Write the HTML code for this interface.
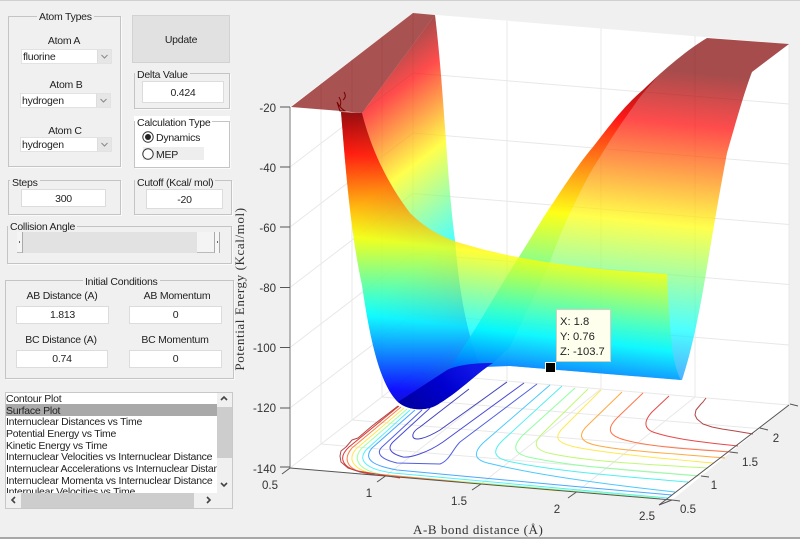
<!DOCTYPE html>
<html><head><meta charset="utf-8">
<style>
html,body{margin:0;padding:0}
body{width:800px;height:539px;overflow:hidden;background:#f0f0f0;position:relative;font-family:"Liberation Sans",Arial,sans-serif;font-size:10.5px;letter-spacing:-.25px;color:#222}
.a{position:absolute;box-sizing:border-box}
.p{border:1px solid #c4c4c4;box-shadow:1px 1px 0 #fafafa}
.t{position:absolute;background:#f0f0f0;padding:0 2px;white-space:nowrap;line-height:12px;height:12px}
.c{position:absolute;white-space:nowrap;line-height:12px;height:12px;transform:translateX(-50%)}
.i{position:absolute;box-sizing:border-box;background:#fff;border:1px solid #dcdcdc;text-align:center;white-space:nowrap}
.s{position:absolute;box-sizing:border-box;background:#fff;border:1px solid #e2e2e2;line-height:14px;padding-left:1px;white-space:nowrap}
.s b{position:absolute;right:0;top:0;bottom:0;width:13px;background:#e6e6e6;border-left:1px solid #ddd}
.s svg{position:absolute;right:3px;top:4px}
.r{position:absolute;left:0;height:11.7px;line-height:12px;white-space:nowrap;width:211px;overflow:hidden}
svg{position:absolute}
</style></head><body>
<div class="a" style="left:0;top:0;width:800px;height:1px;background:#d0d0d0"></div>
<div class="a" style="left:0;top:537px;width:800px;height:2px;background:#a8a8a8"></div>

<div class="a p" style="left:8px;top:16px;width:113px;height:151px"></div>
<div class="t" style="left:37px;top:12px;height:10px;line-height:11px">Atom Types</div>
<div class="c" style="left:64px;top:35px">Atom A</div>
<div class="s" style="left:21px;top:49px;width:91px;height:15px">fluorine<b></b><svg width="7" height="5"><path d="M0.5 1L3.5 4L6.5 1" fill="none" stroke="#888"/></svg></div>
<div class="c" style="left:66px;top:79px">Atom B</div>
<div class="s" style="left:20px;top:93px;width:91px;height:15px">hydrogen<b></b><svg width="7" height="5"><path d="M0.5 1L3.5 4L6.5 1" fill="none" stroke="#888"/></svg></div>
<div class="c" style="left:65px;top:125px">Atom C</div>
<div class="s" style="left:20px;top:137px;width:92px;height:15px">hydrogen<b></b><svg width="7" height="5"><path d="M0.5 1L3.5 4L6.5 1" fill="none" stroke="#888"/></svg></div>

<div class="a" style="left:132px;top:15px;width:98px;height:48px;background:#e1e1e1;border:1px solid #d2d2d2;text-align:center;line-height:48px">Update</div>

<div class="a p" style="left:134px;top:73px;width:96px;height:36px"></div>
<div class="t" style="left:135px;top:69px">Delta Value</div>
<div class="i" style="left:142px;top:81px;width:82px;height:22px;line-height:22px">0.424</div>

<div class="a" style="left:134px;top:116px;width:96px;height:6px;background:#fff"></div>
<div class="a p" style="left:134px;top:121px;width:96px;height:47px;background:#fff"></div>
<div class="t" style="left:135px;top:117px;background:#fff">Calculation Type</div>
<div class="a" style="left:143px;top:147px;width:61px;height:13px;background:#eee"></div>
<svg style="left:142px;top:131px" width="14" height="30"><circle cx="6" cy="6" r="5.2" fill="#fff" stroke="#333"/><circle cx="6" cy="6" r="3" fill="#222"/><circle cx="6" cy="23" r="5.2" fill="#fff" stroke="#333"/></svg>
<div class="t" style="left:154px;top:132px;background:none">Dynamics</div>
<div class="t" style="left:154px;top:149px;background:none">MEP</div>

<div class="a p" style="left:8px;top:180px;width:113px;height:35px"></div>
<div class="t" style="left:10px;top:177px">Steps</div>
<div class="i" style="left:21px;top:189px;width:85px;height:18px;line-height:18px">300</div>

<div class="a p" style="left:134px;top:180px;width:98px;height:35px"></div>
<div class="t" style="left:135px;top:177px">Cutoff (Kcal/ mol)</div>
<div class="i" style="left:146px;top:189px;width:77px;height:20px;line-height:21px">-20</div>

<div class="a p" style="left:7px;top:226px;width:225px;height:38px"></div>
<div class="t" style="left:8px;top:221px">Collision Angle</div>
<div class="a" style="left:17px;top:232px;width:203px;height:21px;background:#f4f4f4;border-bottom:1px solid #bbb"></div>
<div class="a" style="left:23px;top:232px;width:174px;height:21px;background:#e2e2e2"></div>
<div class="a" style="left:22px;top:232px;width:1px;height:21px;background:#aaa"></div>
<div class="a" style="left:214px;top:232px;width:6px;height:21px;background:#f6f6f6;border-left:1px solid #aaa;border-right:1px solid #aaa"></div>
<div class="a" style="left:19px;top:241px;width:1px;height:2px;background:#666"></div>
<div class="a" style="left:217px;top:241px;width:1px;height:2px;background:#666"></div>

<div class="a p" style="left:5px;top:280px;width:229px;height:99px"></div>
<div class="t" style="left:83px;top:276px">Initial Conditions</div>
<div class="c" style="left:62px;top:290px">AB Distance (A)</div>
<div class="c" style="left:177px;top:290px">AB Momentum</div>
<div class="i" style="left:16px;top:306px;width:93px;height:18px;line-height:17px">1.813</div>
<div class="i" style="left:129px;top:306px;width:93px;height:18px;line-height:17px">0</div>
<div class="c" style="left:61px;top:334px">BC Distance (A)</div>
<div class="c" style="left:175px;top:334px">BC Momentum</div>
<div class="i" style="left:16px;top:350px;width:92px;height:18px;line-height:17px">0.74</div>
<div class="i" style="left:129px;top:350px;width:93px;height:18px;line-height:17px">0</div>

<div class="a" style="left:5px;top:392px;width:228px;height:117px;border:1px solid #c8c8c8;background:#f0f0f0"></div>
<div class="a" style="left:6px;top:393px;width:211px;height:100px;background:#fff;overflow:hidden">
<div class="a" style="left:0;top:11px;width:211px;height:12px;background:#a9a9a9"></div>
<div class="r" style="top:0">Contour Plot</div>
<div class="r" style="top:11.6px">Surface Plot</div>
<div class="r" style="top:23.3px">Internuclear Distances vs Time</div>
<div class="r" style="top:35px">Potential Energy vs Time</div>
<div class="r" style="top:46.6px">Kinetic Energy vs Time</div>
<div class="r" style="top:58.3px">Internuclear Velocities vs Internuclear Distance</div>
<div class="r" style="top:70px">Internuclear Accelerations vs Internuclear Distance</div>
<div class="r" style="top:81.6px">Internuclear Momenta vs Internuclear Distance</div>
<div class="r" style="top:93.3px">Internulear Velocities vs Time</div>
</div>
<div class="a" style="left:217px;top:407px;width:15px;height:51px;background:#cdcdcd"></div>
<div class="a" style="left:21px;top:493px;width:173px;height:15px;background:#cdcdcd"></div>
<svg style="left:5px;top:392px" width="228" height="117"><g fill="none" stroke="#444" stroke-width="1.6"><path d="M216 8L219 5L222 8"/><path d="M216 91L219 94L222 91"/><path d="M10 105L7 108L10 111"/><path d="M202 105L205 108L202 111"/></g></svg>

<svg style="left:0;top:0;letter-spacing:0" width="800" height="539" viewBox="0 0 800 539">
<defs>
<linearGradient id="gs" gradientUnits="userSpaceOnUse" x1="350" y1="113" x2="314" y2="417">
<stop offset="0" stop-color="#800000"/><stop offset=".13" stop-color="#ff0000"/><stop offset=".4" stop-color="#ffff00"/><stop offset=".65" stop-color="#00ffff"/><stop offset=".88" stop-color="#0000ff"/><stop offset="1" stop-color="#000080"/>
</linearGradient>
<linearGradient id="gb" gradientUnits="userSpaceOnUse" x1="435" y1="15" x2="615" y2="255">
<stop offset="0" stop-color="#800000"/><stop offset=".125" stop-color="#ff0000"/><stop offset=".357" stop-color="#ffff00"/><stop offset=".64" stop-color="#00ffff"/><stop offset=".8" stop-color="#0080ff"/><stop offset=".92" stop-color="#0000ff"/><stop offset="1" stop-color="#000080"/>
</linearGradient>
<linearGradient id="gw" gradientUnits="userSpaceOnUse" x1="700" y1="38" x2="665" y2="388">
<stop offset="0" stop-color="#800000"/><stop offset=".1" stop-color="#800000"/><stop offset=".25" stop-color="#ff0000"/><stop offset=".535" stop-color="#ffff00"/><stop offset=".83" stop-color="#00ffff"/><stop offset=".97" stop-color="#0090ff"/><stop offset="1" stop-color="#0060ff"/>
</linearGradient>
<linearGradient id="gd" gradientUnits="userSpaceOnUse" x1="470" y1="362" x2="420" y2="412">
<stop offset="0" stop-color="#1018e8"/><stop offset=".5" stop-color="#0000d0"/><stop offset="1" stop-color="#0000a8"/>
</linearGradient>
</defs>
<polygon points="290,107 413,13 789,44 789,405 672,500 290,468" fill="#fff"/>
<g stroke="#e8e8e8" stroke-width="1" fill="none">
<path d="M290 167L413 73L789 104M290 227L413 133L789 164M290 287.500L413 193.500L789 224.500M290 347.500L413 253.500L789 284.500M290 408L413 314L789 345M290 468L413 373L789 405"/>
<path d="M321 83V444M352 59.500V420M382 36.500V397M413 13V373M507 21V381M601 28.500V389M695 36V397M789 44V405"/>
<path d="M385.500 476L507 381M481 484L601 389M576.500 492L695 397M321 444L703 476M352 420L734 452M382 397L764 429"/>
</g>

<!-- contours -->
<g fill="none" stroke-width="1" stroke-linejoin="round">
<path stroke="#b04848" d="M706 398L703 402L701 404L696 410L695 415L697 419L703 424L712 427L722 429L735 431L753 434"/>
<path stroke="#e84848" d="M669 396L652 412C642 423 645 430 656 433C675 439 700 442 738 446"/>
<path stroke="#ff7448" d="M643 393L617 418C605 430 610 436 625 440C650 447 690 449 730 452"/>
<path stroke="#ffa840" d="M622 392L588 425C576 436 582 442 595 445C620 451 680 454 725 458"/>
<path stroke="#ffe850" d="M601 390L564 427C552 438 558 443 575 447C610 454 670 459 713 463"/>
<path stroke="#c0f878" d="M588 389L543 433C530 445 537 451 553 454C590 462 660 465 708 468"/>
<path stroke="#90ffa0" d="M575 388L522 436C510 449 516 455 533 458C575 467 640 471 698 476"/>
<path stroke="#50f0f0" d="M562 386L502 441C490 453 496 459 512 462C560 472 630 477 688 482"/>
<path stroke="#48c8ff" d="M550 385L483 443C471 455 476 461 492 464C545 477 620 486 675 492"/>
<path stroke="#5060e0" d="M537 384L460 442C452 450 450 460 440 464L397 463C380 459 376 453 382 447L422 410"/>
<path stroke="#4848d8" d="M524 383L443 442C427 453 410 458 403 457C388 453 388 447 393 442L430 408"/>
<path stroke="#4040c0" d="M507 382L440 430C425 439 415 441 413 437C412 433 415 430 420 427L469 389"/>
<path stroke="#48a8ff" d="M415 410L372 448C362 460 375 466 397 470L570 486L672 495"/>
<path stroke="#50f0ff" d="M410 410L366 450C356 462 370 470 393 473L668 498"/>
<path stroke="#a0ffa0" d="M407 409L361 449C350 463 365 472 385 475L660 498"/>
<path stroke="#ffe850" d="M404 408L356 449C345 462 358 471 375 474L560 491"/>
<path stroke="#ff8040" d="M401 407L352 448C341 461 350 470 365 473L460 482"/>
<path stroke="#e03838" d="M399 406L349 447C336 459 345 468 358 471L400 478"/>
<path stroke="#b04848" d="M398 406L372 426L358 438L352 440L346 447L341 451L340 456L341 462L348 468L360 472L375 475"/>
</g>

<!-- surface layers -->
<path opacity=".7" fill="url(#gb)" d="M341 112L362 113L435 15C438 40 441 70 445 127C448 170 451 210 455 240C459 290 466 330 480 367L487 367C472 378 458 392 440 403C428 412 408 411 398 402C380 385 370 340 362 285C350 230 345 160 341 112Z"/>
<polygon opacity=".68" fill="#800000" points="291,107 413,13 435,15 362,113 341,111"/>
<path d="M344 92Q347 97 343 100M339 97Q342 102 340 106M337 102Q340 108 345 111L340 111Z" fill="none" stroke="#7a0000" stroke-width="1"/>
<path opacity=".7" fill="url(#gw)" d="M707 38L789 44L752 72C745 90 735 125 727 153C720 190 714 225 707 267C700 310 692 350 682 380L510 366L450 367C470 340 495 295 517 260C530 240 540 222 553 203C565 185 580 162 593 147C610 125 625 105 643 90C665 68 690 48 707 38Z"/>
<path opacity=".7" fill="url(#gw)" d="M657 77L643 90C625 105 610 125 593 147C580 162 565 185 553 203C540 222 530 240 517 260C495 295 470 340 450 367L493 363L510 347L548 267C556 245 565 222 573 207C582 188 590 172 600 157C610 140 622 122 633 107C640 96 650 85 657 77Z"/>
<path opacity=".78" fill="url(#gs)" d="M341 112L362 113C370 145 385 180 410 213C425 228 440 236 457 242C490 252 530 262 610 270L667 274C668 300 670 330 673 353C675 365 677 373 681 380L510 366L487 367C472 378 458 392 440 403C428 412 408 411 398 402C380 385 370 340 362 285C350 230 345 160 341 112Z"/>
<path fill="url(#gd)" d="M398 402L447 370C455 366 470 363 493 363L487 367C472 378 458 392 440 403C428 412 408 411 398 402Z"/>

<!-- axes -->
<path d="M290 107V468" stroke="#a8a8a8" stroke-width="1.6" fill="none"/>
<g stroke="#555" stroke-width="1" fill="none">
<path d="M290 468L672 500M659 505L789 405"/>
<path d="M280 107H290M280 167H290M280 227H290M280 287.500H290M280 347.500H290M280 408H290M280 467H290"/>
<path d="M282 474L290 468M385.500 476L377 482M481 484L472 490M576.500 492L568 498M672 500L659 505"/>
<path d="M672 500L680 501M701 476L709 477M730 452L738 453M760 428L768 430M790 404L798 406"/>
</g>
<g font-family="Liberation Sans,Arial,sans-serif" font-size="11.500" fill="#333">
<g text-anchor="end"><text x="276" y="112">-20</text><text x="276" y="172">-40</text><text x="276" y="232">-60</text><text x="276" y="292">-80</text><text x="276" y="352">-100</text><text x="276" y="412">-120</text><text x="276" y="473">-140</text></g>
<g text-anchor="middle"><text x="270" y="489">0.5</text><text x="369" y="497">1</text><text x="459" y="505">1.5</text><text x="557" y="513">2</text><text x="647" y="520">2.5</text>
<text x="688" y="513">0.5</text><text x="714" y="489">1</text><text x="750" y="466">1.5</text><text x="776" y="442">2</text></g>
</g>
<text transform="translate(244,289) rotate(-90)" text-anchor="middle" font-family="Liberation Serif,serif" font-size="13" letter-spacing=".6" fill="#333">Potential Energy (Kcal/mol)</text>
<text x="413" y="534" font-family="Liberation Serif,serif" font-size="13" letter-spacing=".55" fill="#333">A-B bond distance (Å)</text>

<!-- datatip -->
<rect x="556.500" y="309.500" width="54" height="52" fill="#ffffee" stroke="#d0d0c0"/>
<g font-family="Liberation Sans,Arial,sans-serif" font-size="11.200" fill="#222"><text x="560" y="325">X: 1.8</text><text x="560" y="340">Y: 0.76</text><text x="560" y="355">Z: -103.7</text></g>
<rect x="545.500" y="362.500" width="10" height="10" fill="#000" stroke="#fff" stroke-width="1"/>
</svg>
</body></html>
